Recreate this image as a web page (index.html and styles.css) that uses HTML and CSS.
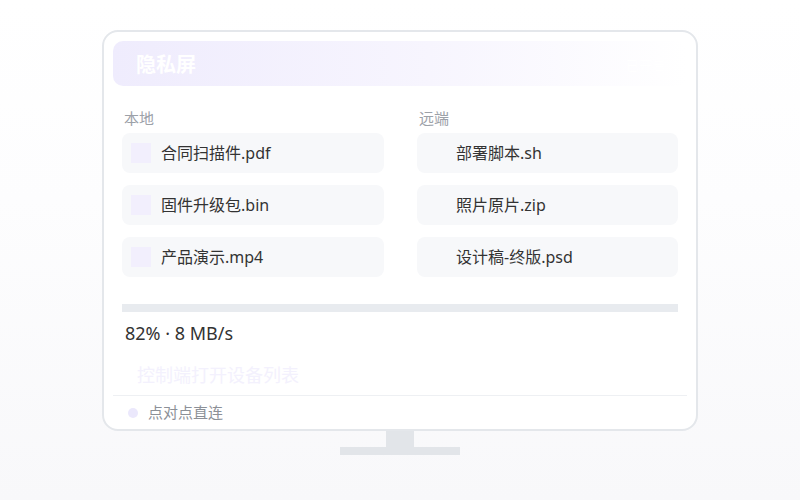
FILE: index.html
```html
<!DOCTYPE html>
<html lang="zh">
<head>
<meta charset="utf-8">
<title>隐私屏</title>
<link rel="stylesheet" href="styles.css">
</head>
<body>
<div class="stage">
  <div class="monitor">
    <div class="header">
      <span class="title">隐私屏</span>
      <span class="status">已开启</span>
    </div>
    <div class="content">
      <div class="columns">
        <div class="col">
          <div class="label">本地</div>
          <div class="file"><span class="icon"></span><span class="name">合同扫描件.pdf</span></div>
          <div class="file"><span class="icon"></span><span class="name">固件升级包.bin</span></div>
          <div class="file"><span class="icon"></span><span class="name">产品演示.mp4</span></div>
        </div>
        <div class="col">
          <div class="label">远端</div>
          <div class="file"><span class="icon icon-hidden"></span><span class="name">部署脚本.sh</span></div>
          <div class="file"><span class="icon icon-hidden"></span><span class="name">照片原片.zip</span></div>
          <div class="file"><span class="icon icon-hidden"></span><span class="name">设计稿-终版.psd</span></div>
        </div>
      </div>
      <div class="progress"><div class="progress-fill" style="width:82%"></div></div>
      <div class="speed">82% · 8 MB/s</div>
      <div class="hint">控制端打开设备列表</div>
    </div>
    <div class="footer">
      <span class="dot"></span><span class="footer-text">点对点直连</span>
    </div>
  </div>
  <div class="neck"></div>
  <div class="base"></div>
</div>
</body>
</html>
```

FILE: styles.css
```css
* { box-sizing: border-box; }
html, body {
  margin: 0;
  padding: 0;
}
body {
  min-height: 500px;
  background: linear-gradient(180deg, #ffffff 0%, #fdfdfe 40%, #f8f8fa 100%);
  font-family: "Noto Sans", "Noto Sans CJK SC", sans-serif;
  color: #333333;
}
.stage {
  display: flex;
  flex-direction: column;
  align-items: center;
  padding-top: 30px;
}
.monitor {
  width: 596px;
  height: 401px;
  border: 2px solid #e4e7eb;
  border-radius: 16px;
  padding: 9px 9px 0 9px;
  display: flex;
  flex-direction: column;
  background: #ffffff;
}
.header {
  height: 45px;
  border-radius: 10px;
  background: linear-gradient(90deg, #efecfd 0%, #f7f5fe 55%, #ffffff 100%);
  display: flex;
  align-items: center;
  justify-content: space-between;
  padding: 3px 22px 0 23px;
}
.title {
  color: #ffffff;
  font-size: 20px;
  font-weight: 700;
  line-height: 1;
}
.status {
  color: #ffffff;
  font-size: 13px;
  line-height: 1;
}
.content {
  padding: 0 9px;
  flex: 1;
  display: flex;
  flex-direction: column;
}
.columns {
  display: grid;
  grid-template-columns: 262px 261px;
  column-gap: 33px;
  margin-top: 22px;
}
.col {
  display: flex;
  flex-direction: column;
  gap: 12px;
}
.label {
  font-size: 15px;
  line-height: 20px;
  color: #9ca1a8;
  padding-left: 2px;
  margin-bottom: -7px;
}
.file {
  height: 40px;
  border-radius: 8px;
  background: #f7f8fa;
  display: flex;
  align-items: center;
  padding-left: 9px;
  gap: 10px;
}
.icon {
  width: 20px;
  height: 20px;
  background: #f2effd;
  flex: none;
}
.icon-hidden {
  background: transparent;
}
.name {
  font-size: 16px;
  color: #333333;
  line-height: 1;
}
.progress {
  margin-top: 27px;
  height: 8px;
  background: #e8ebef;
}
.progress-fill {
  height: 100%;
  background: #e8ebef;
}
.speed {
  margin-top: 9px;
  font-size: 18px;
  line-height: 24px;
  color: #333333;
  padding-left: 3px;
}
.hint {
  margin-top: 18px;
  font-size: 18px;
  line-height: 24px;
  color: #f3f1fd;
  padding-left: 15px;
}
.footer {
  margin-top: auto;
  border-top: 1px solid #eef0f3;
  height: 34px;
  display: flex;
  align-items: center;
  padding-left: 15px;
  gap: 10px;
}
.dot {
  width: 10px;
  height: 10px;
  border-radius: 50%;
  background: #ebe8fc;
}
.footer-text {
  font-size: 15px;
  color: #8c9097;
  line-height: 1;
}
.neck {
  width: 28px;
  height: 16px;
  background: #e2e5e9;
}
.base {
  width: 120px;
  height: 8px;
  background: #e2e5e9;
}
```
